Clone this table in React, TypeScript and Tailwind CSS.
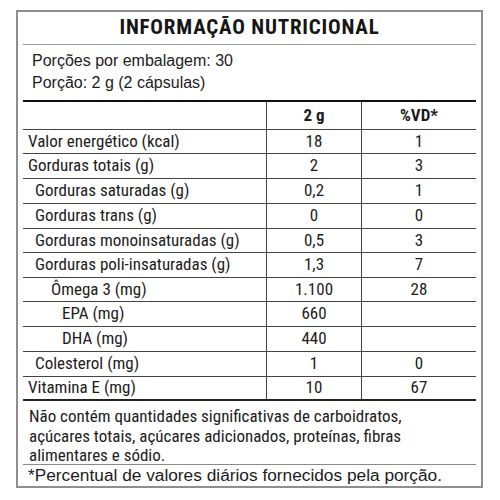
type Row = {
  label: string;
  qty: string;
  vd: string;
  indent: string;
  h: string;
};

const ROWS: Row[] = [
  { label: "Valor energético (kcal)", qty: "18", vd: "1", indent: "pl-[5px]", h: "h-6" },
  { label: "Gorduras totais (g)", qty: "2", vd: "3", indent: "pl-[5px]", h: "h-[25px]" },
  { label: "Gorduras saturadas (g)", qty: "0,2", vd: "1", indent: "pl-[12px]", h: "h-[25px]" },
  { label: "Gorduras trans (g)", qty: "0", vd: "0", indent: "pl-[12px]", h: "h-[25px]" },
  { label: "Gorduras monoinsaturadas (g)", qty: "0,5", vd: "3", indent: "pl-[12px]", h: "h-6" },
  { label: "Gorduras poli-insaturadas (g)", qty: "1,3", vd: "7", indent: "pl-[12px]", h: "h-[25px]" },
  { label: "Ômega 3 (mg)", qty: "1.100", vd: "28", indent: "pl-[28px]", h: "h-6" },
  { label: "EPA (mg)", qty: "660", vd: "", indent: "pl-[39px]", h: "h-[25px]" },
  { label: "DHA (mg)", qty: "440", vd: "", indent: "pl-[39px]", h: "h-[25px]" },
  { label: "Colesterol (mg)", qty: "1", vd: "0", indent: "pl-[12px]", h: "h-[25px]" },
  { label: "Vitamina E (mg)", qty: "10", vd: "67", indent: "pl-[5px]", h: "h-6" },
];

export default function App() {
  return (
    <div className="w-[500px] h-[500px] bg-white pt-[10px] pl-[16px] text-[#1c1c1c]">
      <div className="w-[467px] border-2 border-[#8e8e8e] px-[5px]">
        <div className="h-[32px] flex items-center justify-center font-['Roboto_Condensed',sans-serif] font-bold text-[21px] tracking-[0.8px] text-[#161616]">
          INFORMAÇÃO NUTRICIONAL
        </div>
        <div className="border-b border-[#9a9a9a]" />
        <div className="h-[55px] pt-[5px] pl-[9px] font-['Liberation_Sans',Arial,sans-serif] text-[16px] leading-[22px]">
          <div>Porções por embalagem: 30</div>
          <div>Porção: 2 g (2 cápsulas)</div>
        </div>
        <div className="border-b-2 border-[#111]" />
        <div className="font-['Roboto_Condensed',sans-serif] text-[17px]">
          <div className="flex h-[28px] border-b border-[#444] font-bold">
            <div className="w-[244px] border-r border-[#444]" />
            <div className="w-[95px] border-r border-[#444] flex items-center justify-center">2 g</div>
            <div className="flex-1 flex items-center justify-center">%VD*</div>
          </div>
          {ROWS.map((r, i) => (
            <div
              key={r.label}
              className={`flex ${r.h} ${i === ROWS.length - 1 ? "border-b-2 border-[#222]" : "border-b border-[#444]"}`}
            >
              <div className={`w-[244px] border-r border-[#444] flex items-center ${r.indent}`}>{r.label}</div>
              <div className="w-[95px] border-r border-[#444] flex items-center justify-center">{r.qty}</div>
              <div className="flex-1 flex items-center justify-center">{r.vd}</div>
            </div>
          ))}
          <div className="h-[64px] pl-[6px] pt-[6px] leading-[19.5px] border-b border-[#8a8a8a]">
            Não contém quantidades significativas de carboidratos,
            <br />
            açúcares totais, açúcares adicionados, proteínas, fibras
            <br />
            alimentares e sódio.
          </div>
        </div>
        <div className="h-[21px] pl-[5px] flex items-center font-['Liberation_Sans',Arial,sans-serif] text-[17.3px]">
          *Percentual de valores diários fornecidos pela porção.
        </div>
      </div>
    </div>
  );
}
